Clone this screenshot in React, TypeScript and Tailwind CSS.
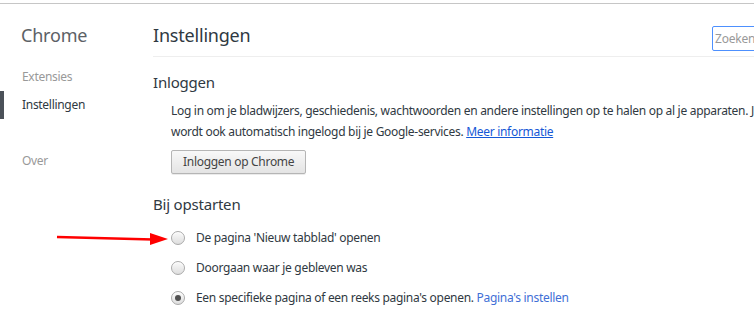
const font = { fontFamily: '"Noto Sans", "Open Sans", sans-serif' };

function Radio({ checked = false }: { checked?: boolean }) {
  return (
    <span className="flex h-[14px] w-[14px] shrink-0 items-center justify-center rounded-full border border-[#a9a9a9] bg-gradient-to-b from-[#fafafa] to-[#dedede] shadow-[inset_0_1px_0_#fff]">
      {checked ? <span className="h-[6px] w-[6px] rounded-full bg-[#505050]" /> : null}
    </span>
  );
}

function Option({ label, checked, link }: { label: string; checked?: boolean; link?: string }) {
  return (
    <div className="flex h-[30px] items-center gap-[11px] pl-[18px]">
      <Radio checked={checked} />
      <span className="whitespace-nowrap text-[12px] tracking-[-0.3px] text-[#303942]">
        {label}
        {link ? <span className="text-[#3f6fd6]"> {link}</span> : null}
      </span>
    </div>
  );
}

export default function App() {
  return (
    <div className="relative h-[323px] w-[754px] overflow-hidden bg-white" style={font}>
      <div className="mt-[3px] border-t border-[#c6c6c6]" />
      <div className="flex">
        {/* sidebar */}
        <nav className="w-[153px] shrink-0 pt-[19px]">
          <div className="pl-[21px] text-[18px] leading-[24px] tracking-[-0.2px] text-[#5c6166]">Chrome</div>
          <ul className="mt-[16px] text-[12px] tracking-[-0.3px]">
            <li className="flex h-[28px] items-center pl-[22px] text-[#999]">Extensies</li>
            <li className="flex h-[28px] items-center border-l-[4px] border-[#4b5159] pl-[18px] text-[#303942]">
              Instellingen
            </li>
            <li className="mt-[28px] flex h-[28px] items-center pl-[22px] text-[#999]">Over</li>
          </ul>
        </nav>

        {/* main */}
        <main className="min-w-0 flex-1">
          <header className="flex h-[53px] items-center justify-between border-b border-[#eeeeee]">
            <h1 className="pt-[10px] text-[18px] leading-[24px] tracking-[-0.2px] text-[#303942]">Instellingen</h1>
            <div className="mr-[-38px] mt-[17px] flex h-[25px] w-[80px] items-center rounded-[2px] border border-[#4d90fe] pl-[2px] text-[12px] tracking-[-0.2px] text-[#999]">
              Zoeken
            </div>
          </header>

          <section className="pt-[13px]">
            <h2 className="text-[15px] leading-[24px] tracking-[-0.2px] text-[#303942]">Inloggen</h2>
            <div className="mt-[6px] pl-[18px]">
              <p className="whitespace-nowrap text-[12px] leading-[21px] tracking-[-0.3px] text-[#303942]">
                Log in om je bladwijzers, geschiedenis, wachtwoorden en andere instellingen op te halen op al je apparaten. Je
                <br />
                wordt ook automatisch ingelogd bij je Google-services.{" "}
                <a className="text-[#1558d6] underline">Meer informatie</a>
              </p>
              <button className="mt-[8px] h-[24px] rounded-[2px] border border-[#b5b5b5] bg-gradient-to-b from-[#f8f8f8] to-[#e4e4e4] px-[11px] text-[12px] tracking-[-0.3px] text-[#444] shadow-[0_1px_0_rgba(0,0,0,0.08)]">
                Inloggen op Chrome
              </button>
            </div>
          </section>

          <section className="pt-[18px]">
            <h2 className="text-[15px] leading-[24px] tracking-[-0.2px] text-[#303942]">Bij opstarten</h2>
            <div className="mt-[7px]">
              <Option label="De pagina 'Nieuw tabblad' openen" />
              <Option label="Doorgaan waar je gebleven was" />
              <Option label="Een specifieke pagina of een reeks pagina's openen." checked link="Pagina's instellen" />
            </div>
          </section>
        </main>
      </div>

      {/* red annotation arrow */}
      <svg className="absolute left-[55px] top-[228px]" width="115" height="20" viewBox="0 0 115 20">
        <line x1="2" y1="9" x2="98" y2="11.5" stroke="#f00" strokeWidth="2.5" />
        <polygon points="95,5 113,11 95,17" fill="#f00" />
      </svg>
    </div>
  );
}
